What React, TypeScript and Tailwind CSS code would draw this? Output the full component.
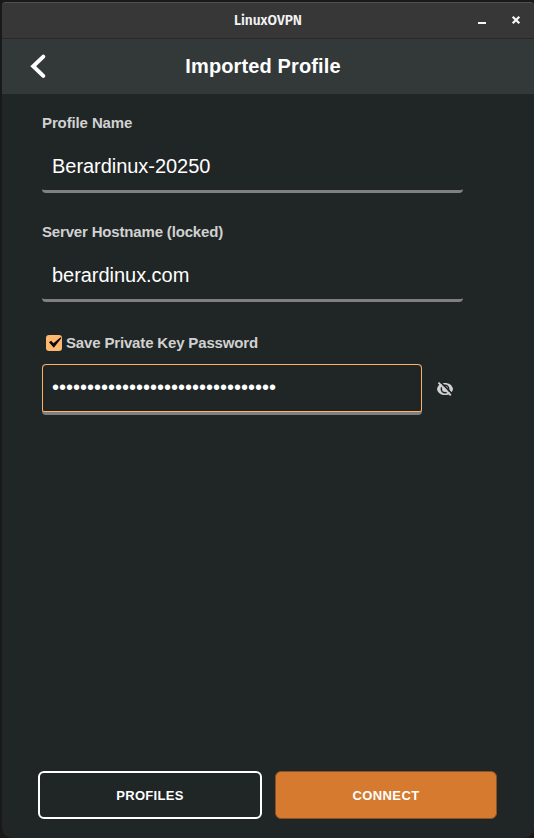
import React from "react";

function TitleBar() {
  return (
    <div className="relative flex h-[37px] shrink-0 items-center justify-center rounded-t-[4px] border-t border-b border-t-[#505050] border-b-[#282828] bg-[#373737]">
      <span className="text-[14px] leading-[18px] font-semibold whitespace-nowrap text-[#f3f3f3] font-['Fira_Sans','Noto_Sans',sans-serif]">
        <svg className="block" width="70" height="20" aria-label="LinuxOVPN">
          <text x="1" y="14" textLength="68" lengthAdjust="spacingAndGlyphs" fill="currentColor">
            LinuxOVPN
          </text>
        </svg>
      </span>
      <div className="absolute top-[12px] right-[13px] flex gap-[24px]">
        <svg width="10" height="10" viewBox="0 0 10 10">
          <path d="M1 7h8v2H1z" fill="#f6f6f6" />
        </svg>
        <svg width="10" height="10" viewBox="0 0 10 10">
          <path d="M1.700 1.700 8.300 8.300M8.300 1.700 1.700 8.300" stroke="#f6f6f6" strokeWidth="2.300" fill="none" />
        </svg>
      </div>
    </div>
  );
}

function Header() {
  return (
    <header className="flex h-[55px] shrink-0 items-center bg-[#333939]">
      <button className="ml-[27px] flex w-5 justify-center pb-[2px]" aria-label="Back">
        <svg width="20" height="26" viewBox="0 0 20 26">
          <path d="M14.3 3.6 4.2 13.2l10.1 9.7" fill="none" stroke="#fff" strokeWidth="4" strokeLinecap="round" strokeLinejoin="miter" />
        </svg>
      </button>
      <h1 className="mr-[57px] flex-1 pb-[2px] text-center text-[20px] leading-6 font-bold tracking-[0.12px] text-white">Imported Profile</h1>
    </header>
  );
}

function Field({ label, value, labelTracking }: { label: string; value: string; labelTracking: string }) {
  return (
    <div className="h-[109px]">
      <div className={`text-[15px] leading-[18px] font-bold text-[#d1d1d1] ${labelTracking}`}>{label}</div>
      <div className="mt-[11px] flex h-[50px] w-[421px] items-center rounded-[4px] border-b-[3px] border-[#808080] px-[10px] pb-[2px] text-[20px] tracking-[-0.04px] text-white">
        {value}
      </div>
    </div>
  );
}

export default function App() {
  return (
    <div className="h-[838px] w-[534px] overflow-hidden bg-[#191919] pt-[2px] pl-[2px] font-['Liberation_Sans',Arial,sans-serif]">
      <div className="flex h-[836px] flex-col rounded-t-[4px] rounded-b-[10px] bg-[#202626]">
        <TitleBar />
        <Header />
        <main className="flex flex-1 flex-col pt-[20px] pl-[40px]">
          <Field label="Profile Name" value="Berardinux-20250" labelTracking="tracking-[-0.12px]" />
          <Field label="Server Hostname (locked)" value="berardinux.com" labelTracking="tracking-[-0.17px]" />
          <div className="mt-[2px] ml-[4px] flex h-[18px] items-center gap-[4px]">
            <span className="flex size-4 items-center justify-center rounded-[3px] bg-[#ffb870]">
              <svg width="16" height="16" viewBox="0 0 16 16">
                <path d="M3 7.300 5.100 5.700 7.500 8.200 14.600 2.300 15.300 3.300 7.800 12.800Z" fill="#080808" />
              </svg>
            </span>
            <span className="text-[15px] leading-[18px] font-bold tracking-[-0.16px] text-[#d1d1d1]">Save Private Key Password</span>
          </div>
          <div className="mt-[12px] flex">
            <div className="h-[51px] w-[380px] rounded-[4px] bg-[#808080]">
              <div className="flex h-[48px] items-center rounded-t-[4px] rounded-b-[2px] border border-[#ffb166] bg-[#202626] px-[9px] pb-[3px] text-[20px] leading-6 text-white">
                <span>••••••••••••••••••••••••••••••••</span>
              </div>
            </div>
            <svg className="mt-[17px] ml-[15px]" width="16" height="16" viewBox="0 0 16 16">
              <path d="M0 8C.8 4 4 2 8 2s7.200 2 8 6c-.8 4-4 6-8 6S.8 12 0 8Z" fill="#d1d1d1" />
              <circle cx="8" cy="8" r="3.700" fill="none" stroke="#202626" strokeWidth="1.500" />
              <path d="M3.200.900 15.500 13.200" stroke="#202626" strokeWidth="1.700" />
              <path d="m1.500 1.700 12.300 12.600" stroke="#d1d1d1" strokeWidth="1.900" />
            </svg>
          </div>
        </main>
        <footer className="flex gap-[13px] pb-[19px] pl-[36px] text-[13px] font-bold text-white">
          <button className="h-12 w-[224px] rounded-[6px] border-2 border-white pt-[2px] tracking-[0.3px]">PROFILES</button>
          <button className="h-12 w-[222px] rounded-[6px] border border-[#895124] bg-[#d57a2f] pt-[2px] tracking-[0.4px]">CONNECT</button>
        </footer>
      </div>
    </div>
  );
}
